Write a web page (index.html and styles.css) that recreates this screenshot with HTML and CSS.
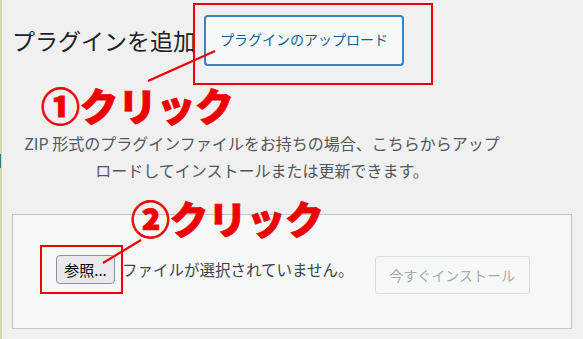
FILE: index.html
```html
<!DOCTYPE html>
<html lang="ja">
<head>
<meta charset="utf-8">
<title>プラグインを追加</title>
<link rel="stylesheet" href="styles.css">
</head>
<body>
<div class="page">
  <div class="side-stripe"><span class="side-mark"></span></div>
  <main class="content">
    <header class="head">
      <h1 class="title">プラグインを追加</h1>
      <a class="upload-btn">プラグインのアップロード</a>
    </header>
    <p class="desc">ZIP 形式のプラグインファイルをお持ちの場合、こちらからアップ<br>ロードしてインストールまたは更新できます。</p>
    <form class="upload-box">
      <span class="browse-btn">参照...</span>
      <span class="file-label">ファイルが選択されていません。</span>
      <span class="install-btn">今すぐインストール</span>
    </form>
  </main>

  <div class="mark-box mark-box-1"></div>
  <div class="mark-box mark-box-2"></div>
  <svg class="mark-lines" width="583" height="339" viewBox="0 0 583 339">
    <line x1="148" y1="81" x2="215" y2="51" stroke="#ee0000" stroke-width="2.2"/>
    <line x1="103" y1="263" x2="141" y2="240" stroke="#ee0000" stroke-width="2.2"/>
  </svg>
  <div class="callout callout-1">①クリック</div>
  <div class="callout callout-2">②クリック</div>
</div>
</body>
</html>
```

FILE: styles.css
```css
* { box-sizing: border-box; }
html, body { margin: 0; padding: 0; }
body {
  background: #f0f0f1;
  font-family: "Noto Sans CJK JP", "Noto Sans", sans-serif;
  color: #1d2327;
  width: 583px;
  height: 339px;
  overflow: hidden;
}
.page {
  position: relative;
  display: flex;
  height: 339px;
}
.side-stripe {
  position: relative;
  width: 2px;
  flex: 0 0 2px;
  background: #d3dbae;
}
.side-mark {
  position: absolute;
  left: 0;
  top: 154px;
  width: 1px;
  height: 14px;
  background: #2a7f74;
}
.content {
  flex: 1;
  padding-left: 10px;
}
.head {
  display: flex;
  align-items: center;
  padding-top: 15px;
  height: 66px;
}
.title {
  margin: 0;
  font-size: 23px;
  font-weight: 400;
  line-height: 1;
  color: #1d2327;
  letter-spacing: 0;
}
.upload-btn {
  margin-left: 8px;
  width: 200px;
  height: 51px;
  border: 2px solid #3d82c0;
  border-radius: 4px;
  background: #f6f7f7;
  color: #135e96;
  font-size: 14px;
  display: flex;
  align-items: center;
  justify-content: center;
  padding-bottom: 4px;
}
.desc {
  margin: 64px 0 0;
  width: 500px;
  text-align: center;
  font-size: 16px;
  line-height: 27px;
  color: #50575e;
}
.upload-box {
  margin: 30px 0 0;
  width: 560px;
  height: 115px;
  border: 1px solid #c3c4c7;
  background: #f6f7f7;
  display: flex;
  align-items: flex-start;
  padding: 40px 0 0 43px;
}
.browse-btn {
  width: 59px;
  height: 29px;
  border: 1px solid #8f8f9d;
  border-radius: 4px;
  background: #e9e9ed;
  color: #000;
  font-size: 15px;
  display: flex;
  align-items: center;
  justify-content: center;
}
.file-label {
  margin-left: 7px;
  font-size: 15.5px;
  line-height: 29px;
  color: #3c434a;
}
.install-btn {
  margin-left: 21px;
  margin-top: 1px;
  width: 155px;
  height: 38px;
  border: 1px solid #dcdcde;
  border-radius: 3px;
  background: #f6f7f7;
  color: #a7aaad;
  font-size: 14px;
  display: flex;
  align-items: center;
  justify-content: center;
}
.mark-box {
  position: absolute;
  border: 2px solid #ee0000;
}
.mark-box-1 { left: 193px; top: 3px; width: 240px; height: 82px; }
.mark-box-2 { left: 40px; top: 245px; width: 83px; height: 49px; }
.mark-lines {
  position: absolute;
  left: 0;
  top: 0;
  pointer-events: none;
}
.callout {
  position: absolute;
  color: #ee0000;
  font-size: 39px;
  font-weight: 900;
  line-height: 39px;
  white-space: nowrap;
  letter-spacing: -0.5px;
  -webkit-text-stroke: 0.8px #ee0000;
}
.callout-1 { left: 41px; top: 85px; }
.callout-2 { left: 131px; top: 198px; }
```
